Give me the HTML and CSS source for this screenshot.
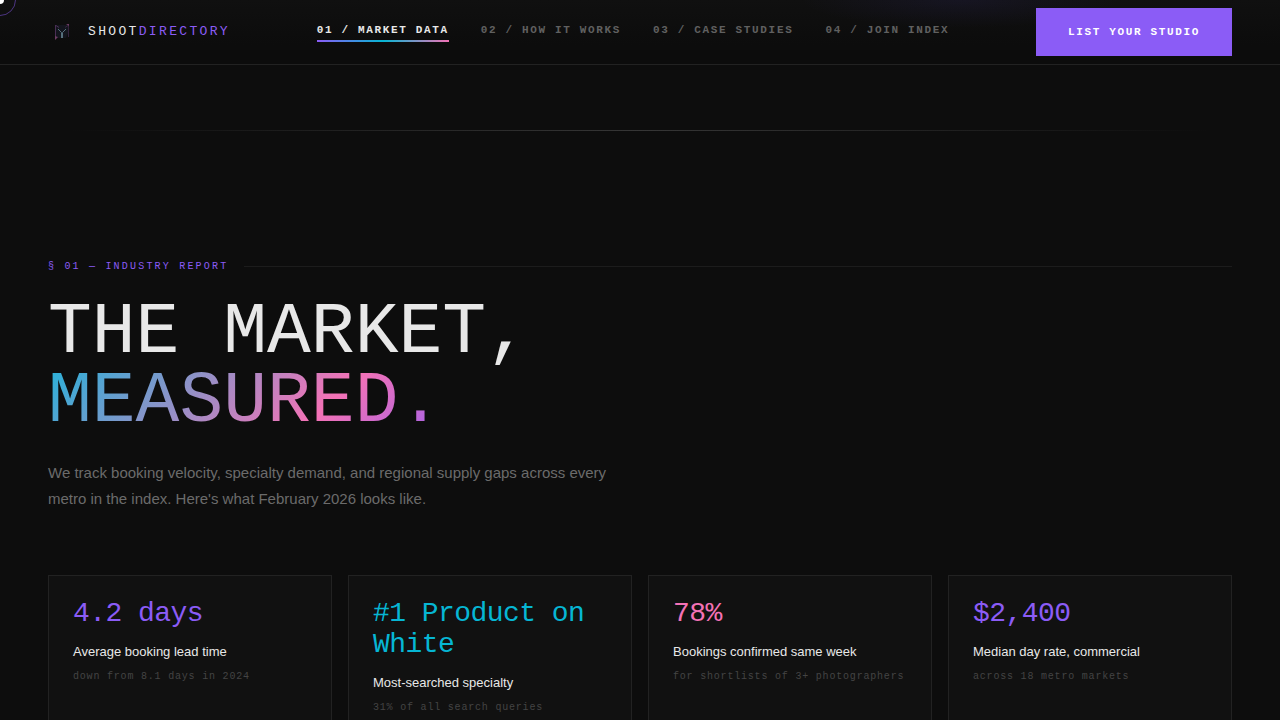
FILE: index.html
```
<!DOCTYPE html>
<html lang="en">
<head>
    <meta charset="UTF-8">
    <meta name="viewport" content="width=device-width, initial-scale=1">
    <title>ShootDirectory</title>
    <link rel="stylesheet" href="styles.css">
</head>
<body>
<div class="cursor-ring"></div>
<div class="cursor-dot"></div>

<header class="header">
    <a class="logo" href="#">
        <svg class="logo-mark" viewBox="0 0 28 28" aria-hidden="true">
            <path d="M8 7h12l1 6-3 7H9l-2-6z" fill="#13151d"/>
            <path d="M7.500 7v14M8 7.500l3 2" fill="none" stroke="#4a2f55"/>
            <path d="M20.500 7v12M20 7.500l-3 2" fill="none" stroke="#33223c"/>
            <path d="M10 11l3.500 3.500V20M18 11l-3.500 3.500V20" fill="none" stroke="#56707c"/>
            <path d="M7 18l3 1-3 3zM18 6h3v2z" fill="#6d3d64"/>
        </svg>
        <span class="logo-text">SHOOT<span>DIRECTORY</span></span>
    </a>
    <nav class="nav">
        <a class="active" href="#market">01 / MARKET DATA</a>
        <a href="#how">02 / HOW IT WORKS</a>
        <a href="#cases">03 / CASE STUDIES</a>
        <a href="#join">04 / JOIN INDEX</a>
    </nav>
    <button class="btn" type="button">LIST YOUR STUDIO</button>
</header>

<main>
    <div class="divider"></div>
    <section class="section" id="market">
        <div class="section-label">§ 01 — INDUSTRY REPORT</div>
        <h1 class="title">THE MARKET,<br><span>MEASURED.</span></h1>
        <p class="lead">We track booking velocity, specialty demand, and regional supply gaps across every metro in the index. Here's what February 2026 looks like.</p>
        <div class="stats">
            <div class="stat violet">
                <div class="stat-value">4.2 days</div>
                <div class="stat-name">Average booking lead time</div>
                <div class="stat-note">down from 8.1 days in 2024</div>
            </div>
            <div class="stat cyan">
                <div class="stat-value">#1 Product on White</div>
                <div class="stat-name">Most-searched specialty</div>
                <div class="stat-note">31% of all search queries</div>
            </div>
            <div class="stat pink">
                <div class="stat-value">78%</div>
                <div class="stat-name">Bookings confirmed same week</div>
                <div class="stat-note">for shortlists of 3+ photographers</div>
            </div>
            <div class="stat violet">
                <div class="stat-value">$2,400</div>
                <div class="stat-name">Median day rate, commercial</div>
                <div class="stat-note">across 18 metro markets</div>
            </div>
        </div>
    </section>
</main>
</body>
</html>
```
FILE: styles.css
```
:root {
    --bg: #0d0d0d;
    --line: #222;
    --text: #e8e8e8;
    --violet: #8b5cf6;
    --cyan: #06b6d4;
    --pink: #f472b6;
    --mono: "Liberation Mono", monospace;
    --sans: "Liberation Sans", sans-serif;
}
* {
    box-sizing: border-box;
    margin: 0;
    padding: 0;
}
body {
    background: var(--bg);
    color: var(--text);
    font-family: var(--sans);
    overflow-x: hidden;
}
a {
    color: inherit;
    text-decoration: none;
}

/* custom cursor */
.cursor-dot,
.cursor-ring {
    position: fixed;
    top: 0;
    left: 0;
    border-radius: 50%;
    transform: translate(-50%, -50%);
    pointer-events: none;
    z-index: 20;
}
.cursor-dot {
    width: 8px;
    height: 8px;
    background: #fff;
}
.cursor-ring {
    width: 32px;
    height: 32px;
    border: 1px solid rgba(139, 92, 246, 0.5);
}

/* header */
.header {
    position: sticky;
    top: 0;
    z-index: 10;
    display: flex;
    align-items: center;
    justify-content: space-between;
    padding: 8px 48px;
    border-bottom: 1px solid var(--line);
    background:
        radial-gradient(ellipse 160px 28px at 75% 0, rgba(99, 80, 246, 0.08), transparent),
        linear-gradient(#101010, #0c0c0c 70%);
}
.logo {
    display: flex;
    align-items: center;
    gap: 12px;
}
.logo-mark {
    width: 28px;
    height: 28px;
}
.logo-text {
    font: 13px/20px var(--mono);
    letter-spacing: 0.18em;
}
.logo-text span {
    color: var(--violet);
}
.nav {
    display: flex;
    gap: 32px;
}
.nav a {
    padding-bottom: 4px;
    color: #606060;
    font: bold 11px/16px var(--mono);
    letter-spacing: 0.15em;
}
.nav .active {
    color: var(--text);
    background: linear-gradient(90deg, var(--violet), var(--cyan), var(--pink)) bottom / 100% 2px no-repeat;
}
.btn {
    padding: 16px 32px;
    border: none;
    background: var(--violet);
    color: #fff;
    font: bold 11px/16px var(--mono);
    letter-spacing: 0.15em;
    cursor: pointer;
}

/* market report */
.divider {
    height: 1px;
    margin: 65px 48px 0;
    background: linear-gradient(90deg, transparent 2%, #363636, transparent 98%);
}
.section {
    padding: 128px 48px;
}
.section-label {
    display: flex;
    align-items: center;
    gap: 16px;
    margin-bottom: 24px;
    color: var(--violet);
    font: 10px/15px var(--mono);
    letter-spacing: 0.22em;
}
.section-label::after {
    content: "";
    flex: 1;
    height: 1px;
    background: #1c1c1c;
}
.title {
    margin-bottom: 24px;
    font: 73px/69px var(--mono);
}
.title span {
    background: linear-gradient(135deg, #24b3da, var(--pink) 68%, var(--violet) 108%);
    -webkit-background-clip: text;
    background-clip: text;
    color: transparent;
}
.lead {
    max-width: 580px;
    margin-bottom: 64px;
    color: #6b6b6b;
    font-size: 15px;
    line-height: 1.7;
}
.stats {
    display: grid;
    grid-template-columns: repeat(4, 1fr);
    gap: 16px;
}
.stat {
    padding: 22px 24px;
    border: 1px solid var(--line);
    background: #111;
}
.stat-value {
    margin-bottom: 12px;
    font: 28px/31px var(--mono);
    letter-spacing: -0.02em;
}
.violet .stat-value {
    color: var(--violet);
}
.cyan .stat-value {
    color: var(--cyan);
}
.pink .stat-value {
    color: var(--pink);
}
.stat-name {
    margin-bottom: 6px;
    font-size: 13px;
    line-height: 22px;
}
.stat-note {
    color: #444;
    font: 10px/16px var(--mono);
    letter-spacing: 0.08em;
}
@media (max-width: 1000px) {
    .nav {
        display: none;
    }
    .stats {
        grid-template-columns: repeat(2, 1fr);
    }
}
```
